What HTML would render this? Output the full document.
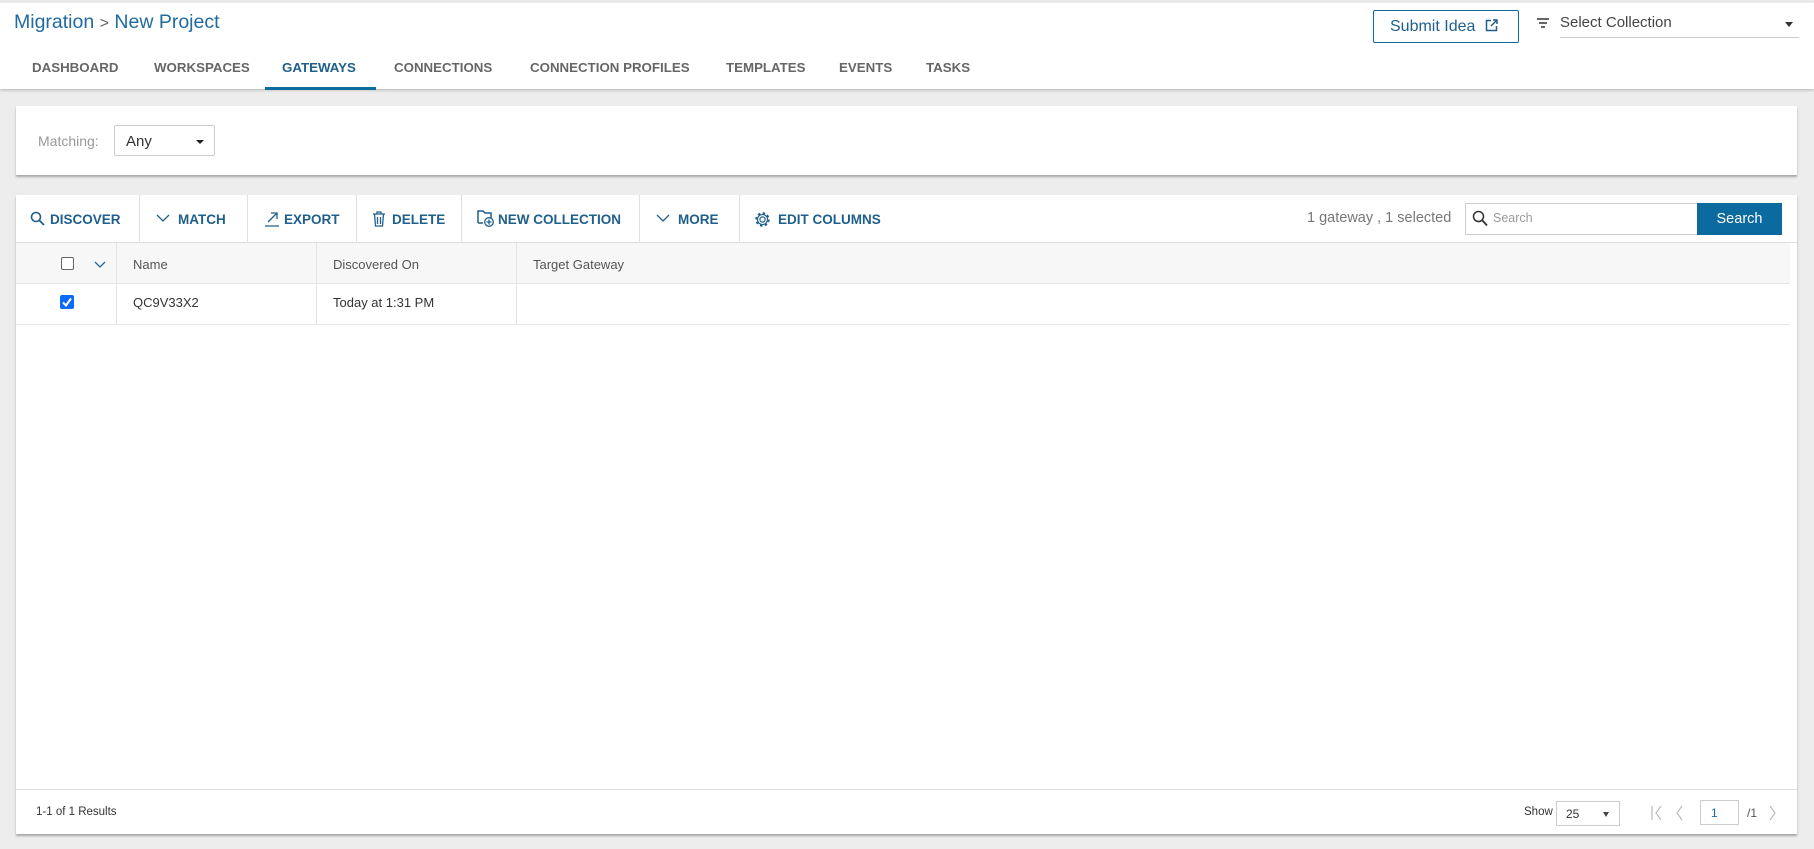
<!DOCTYPE html>
<html><head><meta charset="utf-8"><style>
*{box-sizing:border-box;margin:0;padding:0}
body{width:1814px;height:849px;background:#ededed;font-family:"Liberation Sans",sans-serif;position:relative;overflow:hidden;color:#333}
.a{position:absolute;white-space:nowrap}
.hdr{position:absolute;left:0;top:2px;width:1814px;height:87px;background:#fff;box-shadow:0 1px 3px rgba(0,0,0,.25);border-top:1px solid #eee}
.tab{position:absolute;top:57px;font-size:13.3px;font-weight:bold;color:#666;letter-spacing:0}
.panel{position:absolute;left:16px;width:1781px;background:#fff;box-shadow:0 2px 2px rgba(0,0,0,.3)}
.tb{position:absolute;top:17px;font-size:13.5px;font-weight:bold;color:#1f5f8b}
.sep{position:absolute;top:0;width:1px;height:48px;background:#e0e0e0}
</style></head><body>
<div class="hdr">
<div class="a" style="left:14px;top:8px;font-size:19.5px;color:#1f6aa0">Migration <span style="color:#666;font-size:16px">&gt;</span> New Project</div>
<div class="tab" style="left:32px">DASHBOARD</div>
<div class="tab" style="left:154px">WORKSPACES</div>
<div class="tab" style="left:282px;color:#1f5f8b">GATEWAYS</div>
<div class="a" style="left:265px;top:84px;width:111px;height:3px;background:#0b6a9e"></div>
<div class="tab" style="left:394px">CONNECTIONS</div>
<div class="tab" style="left:530px">CONNECTION PROFILES</div>
<div class="tab" style="left:726px">TEMPLATES</div>
<div class="tab" style="left:839px">EVENTS</div>
<div class="tab" style="left:926px">TASKS</div>
<div class="a" style="left:1373px;top:7px;width:146px;height:33px;border:1px solid #0b6a9e;border-radius:2px;color:#1f5f8b;font-size:16px;padding:7px 0 0 16px">Submit Idea <svg style="margin-left:5px;vertical-align:-1px" width="13" height="13"><path d="M6 1.5H1.5v10h10V7M8 1h4v4M12 1L6 7" fill="none" stroke="#1f5f8b" stroke-width="1.5"/></svg></div>
<svg class="a" style="left:1537px;top:15px" width="12" height="10"><path d="M0 1h12M2 5h8M4 9h4" stroke="#333" stroke-width="1.6"/></svg>
<div class="a" style="left:1560px;top:11px;font-size:15px;color:#444">Select Collection</div>
<div class="a" style="left:1560px;top:34px;width:239px;height:1px;background:#ccc"></div>
<div class="a" style="left:1785px;top:19px;border:4px solid transparent;border-top:5px solid #333"></div>
</div>

<div class="panel" style="top:106px;height:69px">
<div class="a" style="left:22px;top:27px;font-size:14px;color:#999">Matching:</div>
<div class="a" style="left:98px;top:19px;width:101px;height:31px;border:1px solid #ccc;border-radius:2px;font-size:15px;padding:7px 11px">Any</div>
<div class="a" style="left:180px;top:34px;border:4px solid transparent;border-top:4px solid #222"></div>
</div>

<div class="panel" style="top:195px;height:639px">
<div class="a" style="left:0;top:47px;width:1781px;height:1px;background:#ddd"></div>
<svg class="a" style="left:14px;top:16px" width="16" height="16"><circle cx="6" cy="6" r="4.5" fill="none" stroke="#1f5f8b" stroke-width="1.6"/><path d="M9.5 9.5l4.5 4.5" stroke="#1f5f8b" stroke-width="1.8"/></svg>
<div class="tb" style="left:34px">DISCOVER</div>
<div class="sep" style="left:123px"></div>
<svg class="a" style="left:140px;top:19px" width="14" height="9"><path d="M1 1l6 6 6-6" fill="none" stroke="#1f5f8b" stroke-width="1.3"/></svg>
<div class="tb" style="left:162px">MATCH</div>
<div class="sep" style="left:231px"></div>
<svg class="a" style="left:248px;top:16px" width="16" height="16"><path d="M1 15h14M4 11l9-9M7 2h6v6" fill="none" stroke="#1f5f8b" stroke-width="1.3"/></svg>
<div class="tb" style="left:268px">EXPORT</div>
<div class="sep" style="left:340px"></div>
<svg class="a" style="left:356px;top:15px" width="14" height="18"><path d="M1 4h12M5 4V2h4v2M2.5 4l1 12h7l1-12M5.5 7v7M8.5 7v7" fill="none" stroke="#1f5f8b" stroke-width="1.3"/></svg>
<div class="tb" style="left:376px">DELETE</div>
<div class="sep" style="left:445px"></div>
<svg class="a" style="left:461px;top:14px" width="18" height="19"><path d="M1 14V2h5l2 2h6v6" fill="none" stroke="#1f5f8b" stroke-width="1.5"/><path d="M1 14h5" stroke="#1f5f8b" stroke-width="1.5"/><circle cx="12" cy="13" r="4.3" fill="#fff" stroke="#1f5f8b" stroke-width="1.3"/><path d="M12 10.5v5M9.5 13h5" stroke="#1f5f8b" stroke-width="1.3"/></svg>
<div class="tb" style="left:482px">NEW COLLECTION</div>
<div class="sep" style="left:623px"></div>
<svg class="a" style="left:640px;top:19px" width="14" height="9"><path d="M1 1l6 6 6-6" fill="none" stroke="#1f5f8b" stroke-width="1.3"/></svg>
<div class="tb" style="left:662px">MORE</div>
<div class="sep" style="left:723px"></div>
<svg class="a" style="left:738px;top:16px" width="17" height="17"><circle cx="8.5" cy="8.5" r="6" fill="none" stroke="#1f5f8b" stroke-width="2.4" stroke-dasharray="2.4 2.3"/><circle cx="8.5" cy="8.5" r="5" fill="#fff" stroke="#1f5f8b" stroke-width="1.1"/><circle cx="8.5" cy="8.5" r="2.6" fill="none" stroke="#1f5f8b" stroke-width="1.2"/></svg>
<div class="tb" style="left:762px">EDIT COLUMNS</div>
<div class="a" style="left:1291px;top:15px;font-size:14.5px;color:#777">1 gateway , 1 selected</div>
<div class="a" style="left:1449px;top:8px;width:233px;height:32px;border:1px solid #ccc;background:#fff"></div>
<svg class="a" style="left:1456px;top:15px" width="16" height="17"><circle cx="6.5" cy="6.5" r="5" fill="none" stroke="#333" stroke-width="1.5"/><path d="M10 10l5 5.5" stroke="#333" stroke-width="1.8"/></svg>
<div class="a" style="left:1477px;top:16px;font-size:12.5px;color:#999">Search</div>
<div class="a" style="left:1681px;top:8px;width:85px;height:32px;background:#0b6a9e;color:#fff;font-size:14.5px;text-align:center;line-height:32px">Search</div>

<div class="a" style="left:0;top:48px;width:1774px;height:41px;background:#f7f7f7;border-bottom:1px solid #e5e5e5"></div>
<div class="a" style="left:45px;top:62px;width:13px;height:13px;border:1px solid #666;border-radius:2px;background:#fff"></div>
<svg class="a" style="left:78px;top:66px" width="12" height="8"><path d="M1 1l5 5 5-5" fill="none" stroke="#1f6aa0" stroke-width="1.3"/></svg>
<div class="a" style="left:100px;top:48px;width:1px;height:82px;background:#e5e5e5"></div>
<div class="a" style="left:300px;top:48px;width:1px;height:82px;background:#e5e5e5"></div>
<div class="a" style="left:500px;top:48px;width:1px;height:82px;background:#e5e5e5"></div>
<div class="a" style="left:117px;top:62px;font-size:13px;color:#555">Name</div>
<div class="a" style="left:317px;top:62px;font-size:13px;color:#555">Discovered On</div>
<div class="a" style="left:517px;top:62px;font-size:13px;color:#555">Target Gateway</div>
<div class="a" style="left:0;top:129px;width:1774px;height:1px;background:#e5e5e5"></div>
<div class="a" style="left:44px;top:100px;width:14px;height:14px;border-radius:2px;background:#0a6cf5"></div>
<svg class="a" style="left:44px;top:100px" width="14" height="14"><path d="M3 7.5l3 3 5-7" fill="none" stroke="#fff" stroke-width="2"/></svg>
<div class="a" style="left:117px;top:100px;font-size:13px;color:#333">QC9V33X2</div>
<div class="a" style="left:317px;top:100px;font-size:13px;color:#333">Today at 1:31 PM</div>

<div class="a" style="left:0;top:594px;width:1781px;height:1px;background:#ddd"></div>
<div class="a" style="left:20px;top:611px;font-size:11.5px;color:#333">1-1 of 1 Results</div>
<div class="a" style="left:1508px;top:611px;font-size:11.5px;color:#333">Show</div>
<div class="a" style="left:1540px;top:606px;width:64px;height:25px;border:1px solid #ccc;font-size:12px;padding:5px 9px">25</div>
<div class="a" style="left:1587px;top:617px;border:3.5px solid transparent;border-top:5px solid #444"></div>
<svg class="a" style="left:1634px;top:610px" width="60" height="16"><path d="M2 1v14M11 1l-5 7 5 7M32 1l-5 7 5 7" fill="none" stroke="#bbb" stroke-width="1.2"/></svg>
<div class="a" style="left:1684px;top:605px;width:39px;height:25px;border:1px solid #ccc;font-size:12px;color:#1f6aa0;padding:5px 10px">1</div>
<div class="a" style="left:1731px;top:611px;font-size:12px;color:#555">/1</div>
<svg class="a" style="left:1752px;top:610px" width="10" height="16"><path d="M2 1l5 7-5 7" fill="none" stroke="#bbb" stroke-width="1.2"/></svg>
</div>
</body></html>
